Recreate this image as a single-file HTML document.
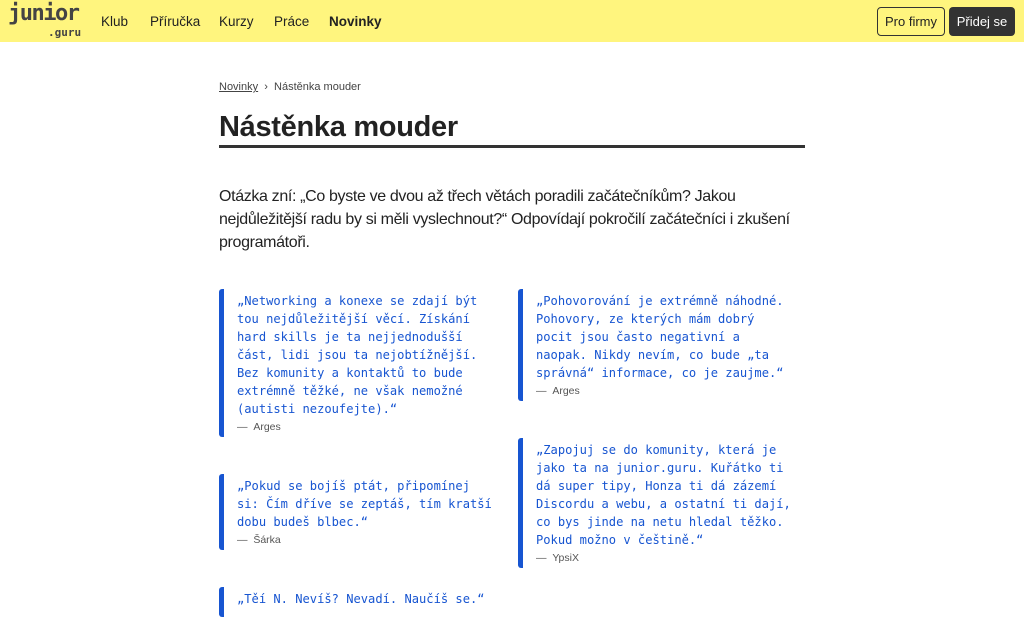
<!DOCTYPE html>
<html><head><meta charset="utf-8"><style>
*{box-sizing:border-box;margin:0;padding:0}
body{width:1024px;height:597px;overflow:hidden;background:#fff;font-family:"Liberation Sans",sans-serif;color:#222}
.hd{height:42px;background:#fff57e;position:relative}
.logo{position:absolute;left:8px;top:2px;font-family:"DejaVu Sans Mono",monospace;font-weight:bold;color:#444;font-size:22px;letter-spacing:-1.5px;line-height:24px}
.logo small{position:absolute;left:40px;top:19px;font-size:11px;letter-spacing:0}
.nav a{position:absolute;top:14px;font-size:13.5px;color:#222;text-decoration:none}
.b1{position:absolute;left:877px;top:7px;width:68px;height:29px;border:1px solid #333;border-radius:4px;font-size:13px;text-align:center;line-height:27px}
.b2{position:absolute;left:949px;top:7px;width:66px;height:29px;background:#333;color:#fff;border-radius:4px;font-size:13px;text-align:center;line-height:29px}
.bc{position:absolute;left:219px;top:81px;font-size:11px;color:#444}
.bc u{color:#444}
h1{position:absolute;left:219px;top:108px;padding-top:3px;font-size:29px;font-weight:bold;color:#222;width:586px;height:40px;border-bottom:3px solid #333;letter-spacing:-0.3px}
.lead{position:absolute;left:219px;top:185px;width:610px;font-size:16px;line-height:23px;color:#222;letter-spacing:-0.35px}
.q{position:absolute;border-left:5px solid #1755d1;border-radius:3px;padding-left:13px;padding-top:3px;font-family:"DejaVu Sans Mono",monospace;font-size:12.1px;line-height:18px;color:#1755d1}
.q div{font-family:"Liberation Sans",sans-serif;font-size:10.5px;color:#555;line-height:18px;margin-top:0}
</style></head><body>
<div class="hd">
<div class="logo">junior<small>.guru</small></div>
<div class="nav"><a style="left:101px">Klub</a><a style="left:150px">Příručka</a><a style="left:219px">Kurzy</a><a style="left:274px">Práce</a><a style="left:329px;font-weight:bold">Novinky</a></div>
<div class="b1">Pro firmy</div><div class="b2">Přidej se</div>
</div>
<div class="bc" style="top:81px"><u>Novinky</u> &nbsp;›&nbsp; Nástěnka mouder</div>
<h1>Nástěnka mouder</h1>
<div class="lead">Otázka zní: „Co byste ve dvou až třech větách poradili začátečníkům? Jakou<br>nejdůležitější radu by si měli vyslechnout?“ Odpovídají pokročilí začátečníci i zkušení<br>programátoři.</div>
<div class="q" style="left:219px;top:289px;height:148px">„Networking a konexe se zdají být<br>tou nejdůležitější věcí. Získání<br>hard skills je ta nejjednodušší<br>část, lidi jsou ta nejobtížnější.<br>Bez komunity a kontaktů to bude<br>extrémně těžké, ne však nemožné<br>(autisti nezoufejte).“<div>— &nbsp;Arges</div></div>
<div class="q" style="left:518px;top:289px;height:112px">„Pohovorování je extrémně náhodné.<br>Pohovory, ze kterých mám dobrý<br>pocit jsou často negativní a<br>naopak. Nikdy nevím, co bude „ta<br>správná“ informace, co je zaujme.“<div>— &nbsp;Arges</div></div>
<div class="q" style="left:219px;top:474px;height:76px">„Pokud se bojíš ptát, připomínej<br>si: Čím dříve se zeptáš, tím kratší<br>dobu budeš blbec.“<div>— &nbsp;Šárka</div></div>
<div class="q" style="left:518px;top:438px;height:130px">„Zapojuj se do komunity, která je<br>jako ta na junior.guru. Kuřátko ti<br>dá super tipy, Honza ti dá zázemí<br>Discordu a webu, a ostatní ti dají,<br>co bys jinde na netu hledal těžko.<br>Pokud možno v češtině.“<div>— &nbsp;YpsiX</div></div>
<div class="q" style="left:219px;top:587px;height:30px">„Těí N. Nevíš? Nevadí. Naučíš se.“</div>
</body></html>
